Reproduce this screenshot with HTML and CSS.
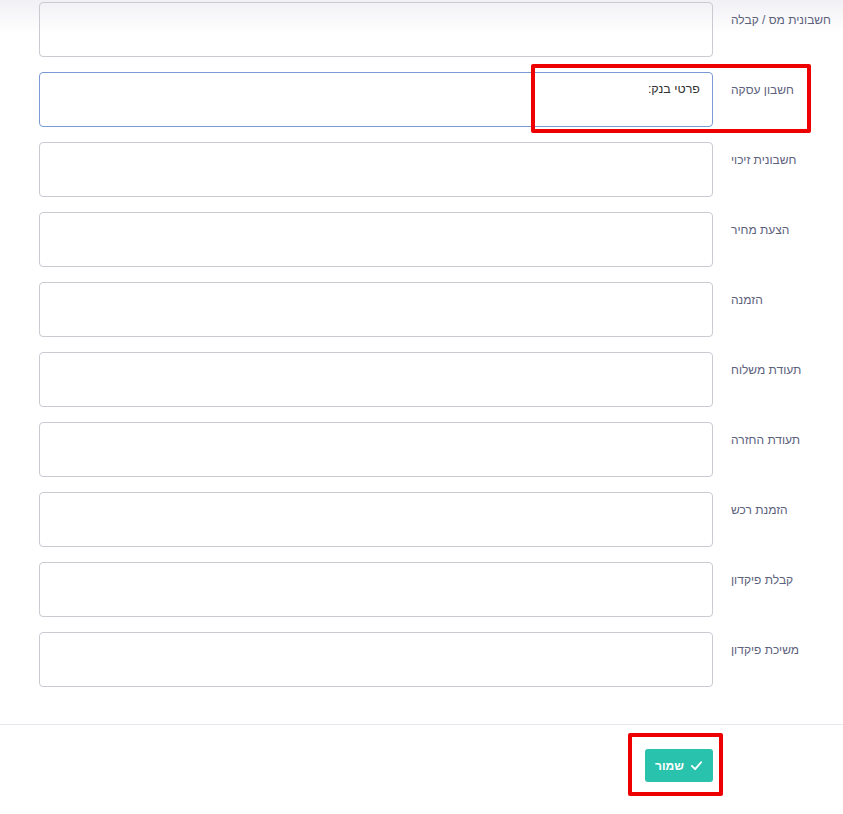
FILE: index.html
```html
<!DOCTYPE html>
<html lang="he" dir="rtl">
<head>
    <meta charset="UTF-8">
    <title>הגדרות מסמכים</title>
    <link rel="stylesheet" href="styles.css">
</head>
<body>

    <!-- Document notes -->
    <div class="form">
        <div class="row">
            <label>חשבונית מס / קבלה</label>
            <textarea></textarea>
        </div>
        <div class="row">
            <label>חשבון עסקה</label>
            <textarea class="focused">פרטי בנק:</textarea>
        </div>
        <div class="row">
            <label>חשבונית זיכוי</label>
            <textarea></textarea>
        </div>
        <div class="row">
            <label>הצעת מחיר</label>
            <textarea></textarea>
        </div>
        <div class="row">
            <label>הזמנה</label>
            <textarea></textarea>
        </div>
        <div class="row">
            <label>תעודת משלוח</label>
            <textarea></textarea>
        </div>
        <div class="row">
            <label>תעודת החזרה</label>
            <textarea></textarea>
        </div>
        <div class="row">
            <label>הזמנת רכש</label>
            <textarea></textarea>
        </div>
        <div class="row">
            <label>קבלת פיקדון</label>
            <textarea></textarea>
        </div>
        <div class="row">
            <label>משיכת פיקדון</label>
            <textarea></textarea>
        </div>
    </div>

    <div class="footer">
        <button class="save">
            <svg width="13" height="13" viewBox="0 0 14 14"><polyline points="2,7.5 5.5,11 12,3.5" fill="none" stroke="white" stroke-width="2" stroke-linecap="round" stroke-linejoin="round"/></svg>
            שמור
        </button>
    </div>

    <!-- annotations -->
    <div class="mark mark-field"></div>
    <div class="mark mark-save"></div>
</body>
</html>
```
FILE: styles.css
```css
body {
    margin: 0;
    font-family: "Liberation Sans", Arial, sans-serif;
    background: linear-gradient(#f1f1f5, #ffffff 34px) no-repeat, white;
    color: #333;
    position: relative;
    height: 814px;
    overflow: hidden;
}

.form {
    padding: 2px 8px 0 39px;
}

.row {
    display: flex;
    gap: 18px;
    margin-bottom: 15px;
}

.row label {
    width: 104px;
    text-align: left;
    white-space: nowrap;
    font-size: 12px;
    line-height: 18px;
    padding-top: 9px;
    color: #5c617c;
}

.row textarea {
    flex: 1;
    height: 55px;
    box-sizing: border-box;
    border: 1px solid #c9cbd1;
    border-radius: 4px;
    padding: 9px 12px;
    font-family: inherit;
    font-size: 12.5px;
    color: #333;
    resize: none;
    background: transparent;
}

.row textarea.focused {
    border-color: #7b9ad4;
}

.footer {
    margin-top: 37px;
    border-top: 1px solid #e6e7ec;
    padding: 24px 130px 0 0;
    display: flex;
    align-items: flex-start;
}

.save {
    display: flex;
    align-items: center;
    gap: 6px;
    height: 33px;
    padding: 0 10px;
    background: #29c2ad;
    border: none;
    border-radius: 3px;
    color: white;
    font-family: inherit;
    font-size: 12px;
    font-weight: bold;
    cursor: pointer;
}

.mark {
    position: absolute;
    border: 4px solid #ee0000;
    border-radius: 2px;
    box-sizing: border-box;
}

.mark-field {
    left: 531px;
    top: 64px;
    width: 280px;
    height: 69px;
}

.mark-save {
    left: 628px;
    top: 733px;
    width: 95px;
    height: 63px;
}
```
